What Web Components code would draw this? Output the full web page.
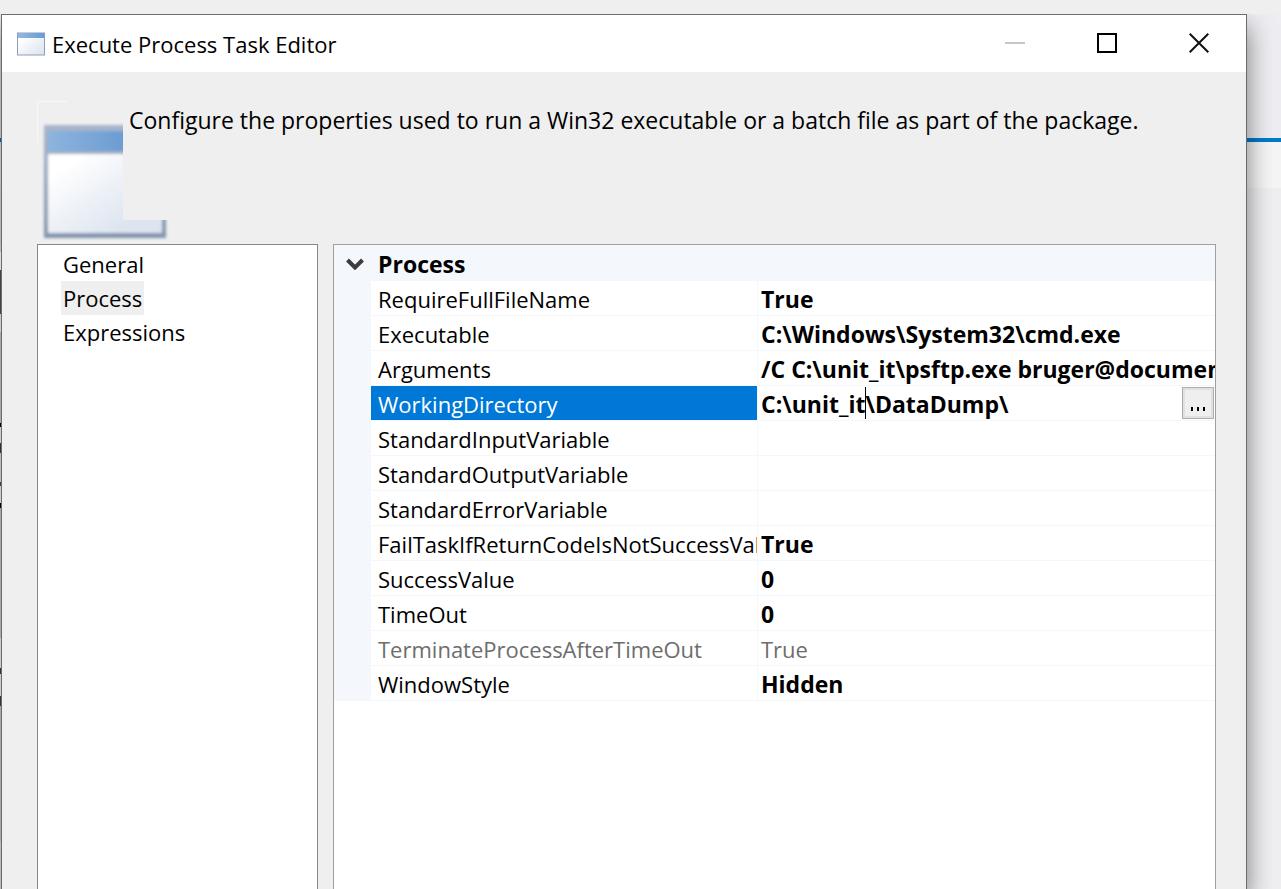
<!DOCTYPE html>
<html lang="en">
<head>
<meta charset="utf-8">
<title>Execute Process Task Editor</title>
<style>
  html, body { margin: 0; height: 100%; }
  body { font: 22px/34px "Open Sans", "Noto Sans", sans-serif; color: #000; background: #efefef; overflow: hidden; }
</style>
</head>
<body>
<desk-top>
  <editor-window heading="Execute Process Task Editor">
    <task-banner slot="banner">Configure the properties used to run a Win32 executable or a batch file as part of the package.</task-banner>
    <page-list slot="pages">
      <page-link>General</page-link>
      <page-link current>Process</page-link>
      <page-link>Expressions</page-link>
    </page-list>
    <property-grid category="Process">
      <property-item name="RequireFullFileName" value="True"></property-item>
      <property-item name="Executable" value="C:\Windows\System32\cmd.exe"></property-item>
      <property-item name="Arguments" value="/C C:\unit_it\psftp.exe bruger@documents"></property-item>
      <property-item name="WorkingDirectory" value="C:\unit_it\DataDump\" active></property-item>
      <property-item name="StandardInputVariable" value=""></property-item>
      <property-item name="StandardOutputVariable" value=""></property-item>
      <property-item name="StandardErrorVariable" value=""></property-item>
      <property-item name="FailTaskIfReturnCodeIsNotSuccessValue" value="True"></property-item>
      <property-item name="SuccessValue" value="0"></property-item>
      <property-item name="TimeOut" value="0"></property-item>
      <property-item name="TerminateProcessAfterTimeOut" value="True" readonly></property-item>
      <property-item name="WindowStyle" value="Hidden"></property-item>
    </property-grid>
  </editor-window>
</desk-top>
<script>
class Base extends HTMLElement {
  render(html) {
    if (!this.shadowRoot) this.attachShadow({ mode: "open" });
    this.shadowRoot.innerHTML = html;
  }
}

customElements.define("desk-top", class extends Base {
  connectedCallback() {
    this.render(`
      <style>
        :host { display: flex; flex-direction: column; height: 100vh; box-sizing: border-box; padding: 14px 34px 0 1px; position: relative; }
        .back { position: absolute; inset: 14px 0 0 0; z-index: -1;
          background: linear-gradient(#eeeef2 124px, #007acc 124px, #007acc 128px, #f5f5f5 128px, #f5f5f5 174px, #efeff2 174px); }
        .edge { position: absolute; inset: 244px auto 0 0; width: 1px;
          background: linear-gradient(#bbb 8px, #ddd 8px, #ddd 26px, #444 26px, #444 70px, #ccc 70px, #ccc 88px, #aaa 88px, #aaa 179px,
            #000 179px, #000 183px, #ccc 183px, #ccc 199px, #333 199px, #333 209px, #bbb 209px, #bbb 238px, #444 238px, #444 242px,
            #ccc 242px, #ccc 259px, #000 259px, #000 264px, #aaa 264px, #aaa 394px, #ccc 394px, #ccc 424px, #333 424px, #333 430px,
            #ccc 430px, #ccc 452px, #333 452px, #333 462px, #aaa 462px, #aaa 597px, #bbb 597px); }
      </style>
      <div class="back"></div><slot></slot><div class="edge"></div>`);
  }
});

customElements.define("editor-window", class extends Base {
  connectedCallback() {
    this.render(`
      <style>
        :host { display: flex; flex-direction: column; flex: 1; min-height: 0; border: 1px solid #6b6b6f; border-bottom: 0;
          background: #efefef; box-shadow: 0 12px 24px rgba(0,0,0,.5); clip-path: inset(0 -34px 0 -1px); }
        header { display: flex; align-items: center; height: 57px; background: #fff; padding: 0 1px 0 15px; }
        h1 { flex: 1; margin: 0 0 0 7px; font: inherit; white-space: nowrap; }
        .icon { display: block; }
        button { align-self: flex-start; width: 92px; height: 56px; padding: 0; border: 0; background: none; display: grid; place-items: center; }
        main { flex: 1; min-height: 0; display: grid; grid-template-columns: 281px minmax(0, 1fr); gap: 15px; padding: 0 30px 0 35px; }
        ::slotted(*) { min-height: 0; }
      </style>
      <header>
        <svg class="icon" width="28" height="24" viewBox="0 0 28 24" aria-hidden="true">
          <defs>
            <linearGradient id="t"><stop stop-color="#93b9e0"/><stop offset="1" stop-color="#699bd3"/></linearGradient>
            <linearGradient id="b" x2="1" y2="1"><stop offset=".2" stop-color="#fff"/><stop offset="1" stop-color="#dbe2ee"/></linearGradient>
          </defs>
          <rect x=".5" y="1" width="27" height="22" fill="url(#b)" stroke="#8d9dbb"/>
          <rect x="1" y="1" width="26" height="5" fill="url(#t)"/>
        </svg>
        <h1>${this.getAttribute("heading")}</h1>
        <button aria-label="Minimize" disabled><svg width="20" height="20"><path d="M0 10H20" stroke="#c8c8c8" stroke-width="2"/></svg></button>
        <button aria-label="Maximize"><svg width="20" height="20"><rect x="1" y="1" width="18" height="18" fill="none" stroke="#000" stroke-width="2"/></svg></button>
        <button aria-label="Close"><svg width="20" height="20"><path d="M.7.7L19.3 19.3M19.3.7L.7 19.3" stroke="#111" stroke-width="2"/></svg></button>
      </header>
      <slot name="banner"></slot>
      <main><slot name="pages"></slot><slot></slot></main>`);
  }
});

customElements.define("task-banner", class extends Base {
  connectedCallback() {
    this.render(`
      <style>
        :host { display: grid; grid-template: 119px 24px / 86px minmax(0, 1fr); padding: 29px 30px 0 35px; font-size: 23px; }
        svg { grid-area: 1 / 1 / 3 / 3; display: block; }
        p { grid-area: 1 / 2; margin: 0; padding: 2px 0 0 6px; background: #efefef; z-index: 1; white-space: nowrap; }
      </style>
      <svg width="132" height="143" viewBox="0 0 132 143" aria-hidden="true">
        <defs>
          <linearGradient id="t"><stop stop-color="#8cb5de"/><stop offset="1" stop-color="#5b8fcb"/></linearGradient>
          <linearGradient id="b" x2="1" y2="1"><stop offset=".15" stop-color="#fff"/><stop offset=".8" stop-color="#dce4ef"/></linearGradient>
          <linearGradient id="f" x2="0" y2="1"><stop stop-color="#a9b5cc"/><stop offset="1" stop-color="#8193ac"/></linearGradient>
          <filter id="s" x="-10%" y="-10%" width="120%" height="120%"><feGaussianBlur stdDeviation="1.4"/></filter>
        </defs>
        <path d="M.5 41V.5H30" fill="none" stroke="#f8f8f8"/>
        <g filter="url(#s)">
          <rect x="7" y="24" width="122" height="113" fill="url(#f)"/>
          <rect x="11" y="30" width="114" height="20" fill="url(#t)"/>
          <rect x="11" y="53" width="114" height="79" fill="url(#b)"/>
        </g>
      </svg>
      <p><slot></slot></p>`);
  }
});

customElements.define("page-list", class extends Base {
  connectedCallback() {
    this.render(`
      <style>
        :host { display: block; background: #fff; border: 1px solid #828790; border-bottom: 0; }
        nav { display: flex; flex-direction: column; align-items: flex-start; padding: 2px 0 0 23px; }
      </style>
      <nav aria-label="Pages"><slot></slot></nav>`);
  }
});

customElements.define("page-link", class extends Base {
  connectedCallback() {
    const current = this.hasAttribute("current");
    this.render(`
      <style>
        :host { display: block; }
        a { display: block; padding: 0 2px; color: #000; text-decoration: none; }
        a[aria-current] { background: #efefef; }
      </style>
      <a href="#"${current ? ' aria-current="page"' : ""}><slot></slot></a>`);
  }
});

customElements.define("property-item", class extends HTMLElement {});

customElements.define("property-grid", class extends Base {
  connectedCallback() {
    const rows = [...this.querySelectorAll("property-item")].map(item => {
      const name = item.getAttribute("name"), value = item.getAttribute("value");
      const active = item.hasAttribute("active");
      const cls = active ? "active" : item.hasAttribute("readonly") ? "readonly" : "";
      const cell = active
        ? `<div class="edit"><input id="value" type="text" value="${value}" spellcheck="false"><i class="caret"></i><button aria-label="Browse"><svg width="16" height="4" aria-hidden="true"><path d="M1 0h2v4H1zM7 0h2v4H7zM13 0h2v4h-2z"/></svg></button></div>`
        : value;
      const label = active ? `<label for="value">${name}</label>` : name;
      return `<tr class="${cls}"><td class="gutter"></td><th scope="row">${label}</th><td class="value">${cell}</td></tr>`;
    }).join("");
    this.render(`
      <style>
        :host { display: block; background: #fff; border: 1px solid #a0a0a0; border-bottom: 0; overflow: hidden; }
        table { width: 100%; table-layout: fixed; border-collapse: separate; border-spacing: 0; line-height: 32px; }
        col.g { width: 37px; } col.n { width: 387px; }
        th, td { height: 32px; padding: 2px 0 0; text-align: left; font-weight: 400; white-space: nowrap; overflow: hidden; }
        thead th, thead td { height: 34px; background: #f4f7fc; font-size: 23px; font-weight: 700; }
        thead svg { display: block; margin: 0 auto 0 12px; }
        thead th, tbody th { padding-left: 7px; }
        tbody th, .value { border-bottom: 1px solid #f4f7fc; }
        tbody th { border-right: 1px solid #f4f7fc; }
        .gutter { background: #f4f7fc; }
        .value { padding-left: 3px; font-size: 23px; font-weight: 700; }
        .readonly th, .readonly .value { color: #6d6d6d; font-size: 22px; font-weight: 400; }
        .active th { color: #fff; background: #0078d7; background-clip: padding-box; }
        .active .value { padding-top: 0; }
        .edit { display: flex; align-items: center; position: relative; height: 34px; }
        input { flex: 1; min-width: 0; height: 34px; box-sizing: border-box; padding: 2px 0 0; border: 0; outline: 0; background: none; font: inherit; color: inherit; }
        .caret { position: absolute; left: 104px; top: 1px; width: 1px; height: 32px; background: #000; }
        button { flex: none; width: 32px; height: 32px; margin-right: 1px; padding: 12px 0 0; border: 1px solid #adadad; background: #efefef; box-shadow: inset 0 0 0 2px #e1e1e1; display: grid; place-items: center; }
      </style>
      <table>
        <colgroup><col class="g"><col class="n"><col></colgroup>
        <thead><tr>
          <td><svg width="18" height="12" aria-hidden="true"><path d="M1.500 2L9 9.500L16.500 2" fill="none" stroke="#3c3c40" stroke-width="4"/></svg></td>
          <th colspan="2" scope="colgroup">${this.getAttribute("category")}</th>
        </tr></thead>
        <tbody>${rows}</tbody>
      </table>`);
  }
});
</script>
</body>
</html>
